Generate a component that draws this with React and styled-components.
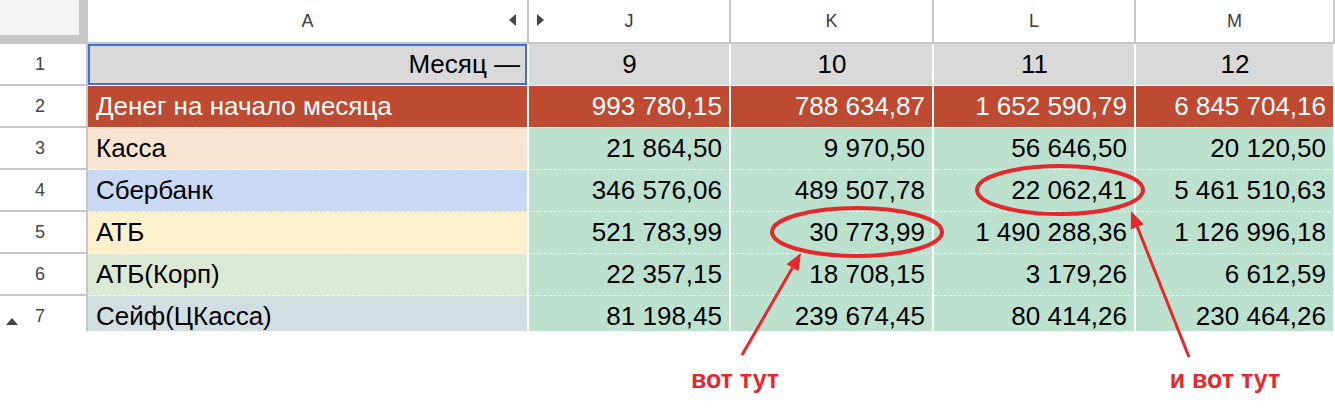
import React from "react";
import styled, { createGlobalStyle } from "styled-components";

const GlobalStyle = createGlobalStyle`
  body {
    margin: 0;
    background: #fff;
    font-family: "Liberation Sans", Arial, sans-serif;
  }
`;

const Page = styled.div`
  position: relative;
  width: 1335px;
  height: 414px;
  overflow: hidden;
  background: #fff;
`;

const Sheet = styled.div`
  display: grid;
  grid-template-columns: 88px 441px 202px 203px 202px 1fr;
  grid-template-rows: 44px repeat(7, 42px);
  height: 331px;
  overflow: hidden;
`;

const Corner = styled.div`
  background: #f4f4f4;
  border-right: 9px solid #c7c7c7;
  border-bottom: 9px solid #c7c7c7;
`;

const ColHeader = styled.div`
  position: relative;
  display: flex;
  align-items: center;
  justify-content: center;
  background: #fff;
  border-right: 2px solid #c7c7c7;
  border-bottom: 2px solid #c7c7c7;
  color: #3c3c3c;
  font-size: 18px;
`;

const HiddenArrow = styled.span`
  position: absolute;
  top: 14px;
  ${(p) => (p.$side === "left" ? "right: 11px;" : "left: 8px;")}
  width: 0;
  height: 0;
  border-top: 6px solid transparent;
  border-bottom: 6px solid transparent;
  ${(p) =>
    p.$side === "left"
      ? "border-right: 7px solid #444;"
      : "border-left: 7px solid #444;"}
`;

const RowHeader = styled.div`
  position: relative;
  display: flex;
  align-items: center;
  justify-content: center;
  padding-right: 6px;
  background: #fff;
  border-right: 2px solid #c7c7c7;
  border-bottom: 2px solid #c7c7c7;
  color: #444;
  font-size: 18px;
`;

const GroupToggle = styled.span`
  position: absolute;
  left: 6px;
  top: 22px;
  width: 0;
  height: 0;
  border-left: 6px solid transparent;
  border-right: 6px solid transparent;
  border-bottom: 7px solid #444;
`;

const Cell = styled.div`
  display: flex;
  align-items: center;
  justify-content: ${(p) =>
    p.$align === "right"
      ? "flex-end"
      : p.$align === "center"
      ? "center"
      : "flex-start"};
  padding: 0 7px 0 8px;
  background: ${(p) => p.$bg};
  color: ${(p) => p.$color || "#000"};
  border-right: 2px solid #fff;
  border-bottom: 1px ${(p) => (p.$dashed ? "dashed rgba(255,255,255,0.75)" : "solid #fff")};
  font-size: 26px;
  white-space: nowrap;
  box-shadow: ${(p) => (p.$selected ? "inset 0 0 0 2px #3a72d6" : "none")};
`;

const Overlay = styled.svg`
  position: absolute;
  left: 0;
  top: 0;
  pointer-events: none;
`;

const Note = styled.div`
  position: absolute;
  top: 365px;
  transform: translateX(-50%);
  color: #e4282c;
  font-size: 25px;
  font-weight: 700;
  white-space: nowrap;
`;

const GREEN = "#bde1cf";

const months = ["9", "10", "11", "12"];

const rows = [
  {
    label: "Денег на начало месяца",
    labelBg: "#bf4a32",
    bg: "#bf4a32",
    color: "#fff",
    values: ["993 780,15", "788 634,87", "1 652 590,79", "6 845 704,16"],
  },
  {
    label: "Касса",
    labelBg: "#f8e4d0",
    values: ["21 864,50", "9 970,50", "56 646,50", "20 120,50"],
  },
  {
    label: "Сбербанк",
    labelBg: "#c9d9f4",
    values: ["346 576,06", "489 507,78", "22 062,41", "5 461 510,63"],
  },
  {
    label: "АТБ",
    labelBg: "#fcf0cd",
    values: ["521 783,99", "30 773,99", "1 490 288,36", "1 126 996,18"],
  },
  {
    label: "АТБ(Корп)",
    labelBg: "#dae8d4",
    values: ["22 357,15", "18 708,15", "3 179,26", "6 612,59"],
  },
  {
    label: "Сейф(ЦКасса)",
    labelBg: "#d1dee2",
    values: ["81 198,45", "239 674,45", "80 414,26", "230 464,26"],
  },
];

const arrowHead = (x1, y1, x2, y2, len = 17, half = 7) => {
  const dx = x2 - x1;
  const dy = y2 - y1;
  const d = Math.hypot(dx, dy);
  const ux = dx / d;
  const uy = dy / d;
  const bx = x2 - ux * len;
  const by = y2 - uy * len;
  return {
    base: [bx, by],
    points: `${x2},${y2} ${bx - uy * half},${by + ux * half} ${bx + uy * half},${by - ux * half}`,
  };
};

const Arrow = ({ from, to }) => {
  const head = arrowHead(from[0], from[1], to[0], to[1]);
  return (
    <g>
      <line
        x1={from[0]}
        y1={from[1]}
        x2={head.base[0]}
        y2={head.base[1]}
        stroke="#e4282c"
        strokeWidth="3"
      />
      <polygon points={head.points} fill="#e4282c" />
    </g>
  );
};

export default function App() {
  return (
    <Page>
      <GlobalStyle />
      <Sheet>
        <Corner />
        <ColHeader>
          A
          <HiddenArrow $side="left" />
        </ColHeader>
        <ColHeader>
          <HiddenArrow $side="right" />J
        </ColHeader>
        <ColHeader>K</ColHeader>
        <ColHeader>L</ColHeader>
        <ColHeader>M</ColHeader>

        <RowHeader>1</RowHeader>
        <Cell $bg="#d9d9d9" $align="right" $selected>
          Месяц —
        </Cell>
        {months.map((m) => (
          <Cell key={m} $bg="#d9d9d9" $align="center">
            {m}
          </Cell>
        ))}

        {rows.map((row, i) => (
          <React.Fragment key={row.label}>
            <RowHeader>
              {i === 5 && <GroupToggle />}
              {i + 2}
            </RowHeader>
            <Cell $bg={row.labelBg} $color={row.color} $dashed={i > 0}>
              {row.label}
            </Cell>
            {row.values.map((v, j) => (
              <Cell
                key={j}
                $bg={row.bg || GREEN}
                $color={row.color}
                $align="right"
                $dashed={i > 0}
              >
                {v}
              </Cell>
            ))}
          </React.Fragment>
        ))}
      </Sheet>

      <Overlay width="1335" height="414" viewBox="0 0 1335 414">
        <ellipse
          cx="857"
          cy="232"
          rx="85"
          ry="24"
          fill="none"
          stroke="#e4282c"
          strokeWidth="4"
        />
        <ellipse
          cx="1060"
          cy="190"
          rx="83"
          ry="24"
          fill="none"
          stroke="#e4282c"
          strokeWidth="4"
        />
        <Arrow from={[742, 355]} to={[801, 253]} />
        <Arrow from={[1189, 357]} to={[1131, 211]} />
      </Overlay>
      <Note style={{ left: 735 }}>вот тут</Note>
      <Note style={{ left: 1225 }}>и вот тут</Note>
    </Page>
  );
}
